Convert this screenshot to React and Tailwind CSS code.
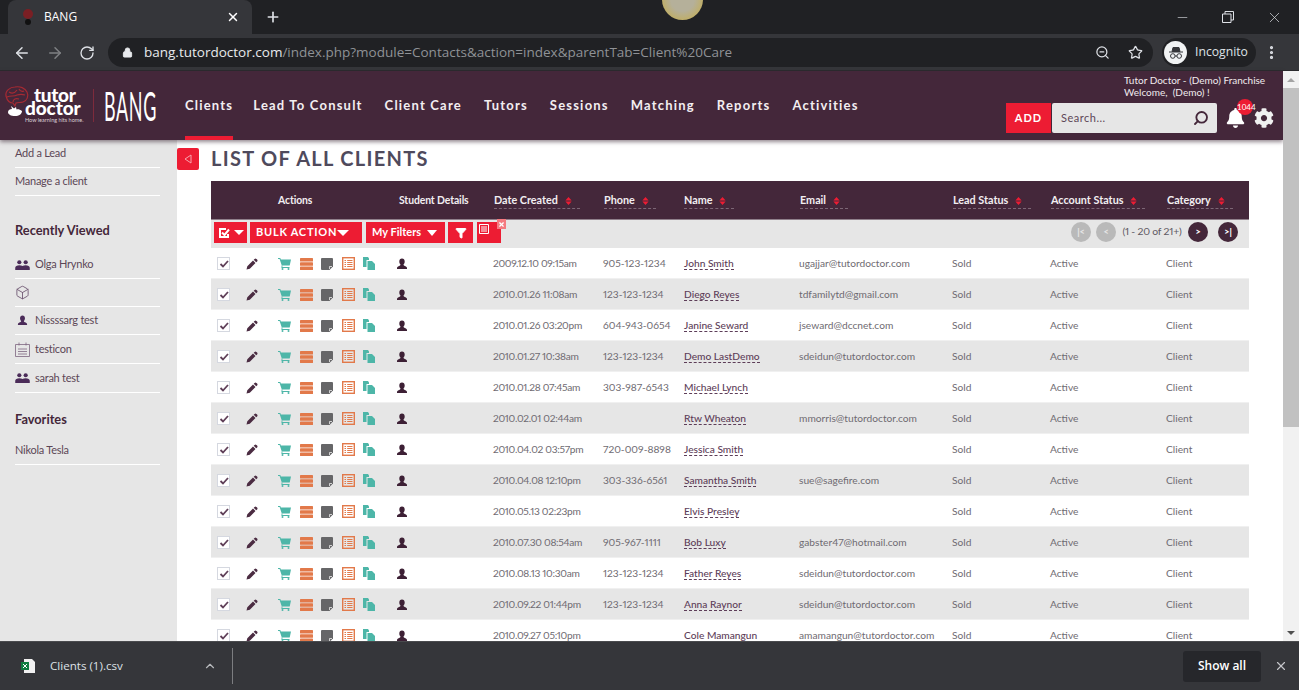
import React from 'react';
import { X, Plus, ArrowLeft, ArrowRight, RotateCw, Lock, ZoomOut, Star, EllipsisVertical, Minus, ChevronUp, Search, Funnel, Box } from 'lucide-react';
import { FaBell, FaCog } from 'react-icons/fa';

const clients = [
  ['2009.12.10 09:15am', '905-123-1234', 'John Smith', 'ugajjar@tutordoctor.com'],
  ['2010.01.26 11:08am', '123-123-1234', 'Diego Reyes', 'tdfamilytd@gmail.com'],
  ['2010.01.26 03:20pm', '604-943-0654', 'Janine Seward', 'jseward@dccnet.com'],
  ['2010.01.27 10:38am', '123-123-1234', 'Demo LastDemo', 'sdeidun@tutordoctor.com'],
  ['2010.01.28 07:45am', '303-987-6543', 'Michael Lynch', ''],
  ['2010.02.01 02:44am', '', 'Rtw Wheaton', 'mmorris@tutordoctor.com'],
  ['2010.04.02 03:57pm', '720-009-8898', 'Jessica Smith', ''],
  ['2010.04.08 12:10pm', '303-336-6561', 'Samantha Smith', 'sue@sagefire.com'],
  ['2010.05.13 02:23pm', '', 'Elvis Presley', ''],
  ['2010.07.30 08:54am', '905-967-1111', 'Bob Luxy', 'gabster47@hotmail.com'],
  ['2010.08.13 10:30am', '123-123-1234', 'Father Reyes', 'sdeidun@tutordoctor.com'],
  ['2010.09.22 01:44pm', '123-123-1234', 'Anna Raynor', 'sdeidun@tutordoctor.com'],
  ['2010.09.27 05:10pm', '', 'Cole Mamangun', 'amamangun@tutordoctor.com'],
];

const navItems = ['Clients', 'Lead To Consult', 'Client Care', 'Tutors', 'Sessions', 'Matching', 'Reports', 'Activities'];

const Person = ({ className }) => (
  <svg viewBox="0 0 12 12" className={className} fill="currentColor">
    <path d="M6 0.5c1.700 0 2.700 1.300 2.700 3 0 1.200-.5 2.400-1.200 3 0 .7.3 1 1.200 1.400 1 .4 2.300.8 2.300 2.100v1H1V10c0-1.300 1.300-1.700 2.300-2.100.9-.4 1.200-.7 1.200-1.400-.7-.6-1.200-1.800-1.200-3 0-1.700 1-3 2.700-3z" />
  </svg>
);

const People = ({ className }) => (
  <svg viewBox="0 0 16 11" className={className} fill="currentColor">
    <circle cx="4.500" cy="2.500" r="2.300" />
    <circle cx="11.500" cy="2.500" r="2.300" />
    <path d="M0 11V8.500C0 6.800 2 5.800 4.500 5.800c1.300 0 2.500.3 3.500.9 1-.6 2.200-.9 3.500-.9C14 5.800 16 6.800 16 8.500V11z" />
  </svg>
);

const PencilIcon = () => (
  <svg viewBox="0 0 12 12" className="w-[12px] h-[12px] ml-[16px] text-[#4b2c42]" fill="currentColor">
    <path d="M8.600.9a1.300 1.300 0 0 1 1.800 0l.7.7a1.300 1.300 0 0 1 0 1.800l-.9.9-2.500-2.500zM7 2.500L9.500 5 3.800 10.700.5 11.500l.8-3.300z" />
  </svg>
);

const Cart = () => (
  <svg viewBox="0 0 13 12" className="w-[13px] h-[12px] text-[#4db6a8]" fill="currentColor">
    <path d="M0 0h2.300l.5 1.500H13l-1.300 6H4.200L4.500 9h7v1H3.400L3.700 7.300 1.600 1H0z" />
    <circle cx="4.500" cy="11" r="1" />
    <circle cx="10.500" cy="11" r="1" />
  </svg>
);

const Stack = () => (
  <svg viewBox="0 0 13 12" className="w-[13px] h-[12px] text-[#e2794a]" fill="currentColor">
    <rect width="13" height="3.600" rx=".6" />
    <rect y="4.200" width="13" height="3.600" rx=".6" />
    <rect y="8.400" width="13" height="3.600" rx=".6" />
  </svg>
);

const Note = () => (
  <svg viewBox="0 0 12 12" className="w-[12px] h-[12px] text-[#666668]" fill="currentColor">
    <path d="M1 0h10a1 1 0 0 1 1 1v7.500L8.500 12H1a1 1 0 0 1-1-1V1a1 1 0 0 1 1-1z" />
    <path d="M8.500 11V8.500H11" fill="none" stroke="#fff" strokeWidth=".7" />
  </svg>
);

const Sheet = () => (
  <svg viewBox="0 0 13 13" className="w-[13px] h-[13px] text-[#e2794a]" fill="none" stroke="currentColor">
    <rect x=".7" y=".7" width="11.600" height="11.600" strokeWidth="1.400" />
    <path d="M2.500 3.500h1.500M2.500 5.500h1.500M2.500 7.500h1.500M2.500 9.500h1.500M5.200 3.500h5.300M5.200 5.500h5.300M5.200 7.500h5.300M5.200 9.500h5.300" />
  </svg>
);

const Copies = () => (
  <svg viewBox="0 0 12 13" className="w-[12px] h-[13px] text-[#4db6a8]" fill="currentColor">
    <path d="M0 0h5l1 1.500V3H3.500v7H0z" />
    <path d="M4.500 4H9l3 3v6H4.500z" />
  </svg>
);

const Logo = () => (
  <svg viewBox="0 0 80 40" className="w-[80px] h-[40px] overflow-visible font-['Lato',sans-serif]">
    <g fill="none" stroke="#a52a33" strokeWidth="1.200">
      <path d="M2 10C1 5 6 1 11 1c5-1 10 1 12 5 2 4 0 9-4 10-3 1-5 0-7 1l-1 3-2-3c-4 0-6-3-7-7z" />
      <path d="M5 6c3 2 6 1 8-2M3 11c4-2 7 0 10-2 3-1 5-1 8 0M9 16c0-3 3-4 6-3M15 3c1 2 3 3 5 2" />
    </g>
    <path d="M4 26c0-2 2-3 4-3l-1-3 3 2.500L12 21l.5 2.500c1.500-.5 3.500 0 5.500 1.500 0 3-3 5-7 5-4 0-7-1.500-7-4z" fill="#fff" />
    <text x="30" y="16" fontSize="19" fontWeight="900" letterSpacing="-0.3" fill="#fff">tutor</text>
    <text x="21" y="29" fontSize="19" fontWeight="900" letterSpacing="-0.1" fill="#fff">doctor</text>
    <text x="21" y="36" fontSize="5.500" fill="#d9ced5">How learning hits home.</text>
  </svg>
);

const SortLabel = ({ label, width }) => (
  <div className={`flex items-center gap-[7px] h-[15px] border-b border-dashed border-[#7c6675] ${width}`}>
    <span className="font-bold text-[10.800px] leading-none text-[#f2eef1] whitespace-nowrap">{label}</span>
    <svg viewBox="0 0 7 9" className="w-[7px] h-[8px] text-[#ed1c33]" fill="currentColor">
      <path d="M3.500 0L7 4H0zM0 5h7L3.500 9z" />
    </svg>
  </div>
);

const PageButton = ({ label, on }) => (
  <div className={`w-[20px] h-[20px] rounded-full flex items-center justify-center text-[9px] font-black ${on ? 'bg-[#44273a] text-white' : 'bg-[#b9b9b9] text-[#e6e6e6]'}`}>
    {label}
  </div>
);

const SideLink = ({ icon, tall, children }) => (
  <div className={`${tall ? 'h-[29px]' : 'h-[28px]'} flex items-center gap-[5px] border-b border-white text-[11px] tracking-[-0.25px] text-[#5c4656]`}>
    {icon && <span className="w-[15px] flex justify-center text-[#4b2c59]">{icon}</span>}
    {children}
  </div>
);

const Row = ({ client, alt }) => (
  <div className={`grid grid-cols-[282px_110px_81px_115px_153px_98px_116px_83px] items-center h-[31px] pt-px border-b border-[#f0f0f0] text-[10.200px] proportional-nums text-[#6f6b72] ${alt ? 'bg-[#e6e6e6]' : 'bg-white'}`}>
    <div className="flex items-center pl-[6px]">
      <span className="w-[13px] h-[13px] border border-[#d5d8e0] bg-white flex items-center justify-center">
        <svg viewBox="0 0 10 10" className="w-[10px] h-[10px] text-[#5f3f58]" fill="none" stroke="currentColor" strokeWidth="1.800">
          <path d="M1.500 5l2.500 2.500L9 2" />
        </svg>
      </span>
      <PencilIcon />
      <span className="ml-[20px] flex items-center w-[97px] justify-between">
        <Cart />
        <Stack />
        <Note />
        <Sheet />
        <Copies />
      </span>
      <Person className="ml-[21px] w-[12px] h-[12px] text-[#3d2035]" />
    </div>
    <div className="tracking-[-0.3px]">{client[0]}</div>
    <div>{client[1]}</div>
    <div>
      <span className="text-[#5d3d58] font-medium border-b border-dashed border-[#5d3d58]">{client[2]}</span>
    </div>
    <div>{client[3]}</div>
    <div>Sold</div>
    <div>Active</div>
    <div>Client</div>
  </div>
);

export default function App() {
  return (
    <div className="relative h-[690px] w-[1299px] overflow-hidden flex flex-col bg-white font-['Lato',sans-serif]">
      {/* ブラウザのタブバー */}
      <div className="h-[34px] shrink-0 bg-[#202124] flex items-end pl-[8px] text-white font-['Open_Sans',sans-serif]">
        <div className="w-[244px] h-[34px] rounded-t-[8px] bg-[#35363a] flex items-center pl-[14px] pr-[12px]">
          <svg viewBox="0 0 12 16" className="w-[12px] h-[16px]">
            <circle cx="6" cy="5" r="5" fill="#7a1f24" />
            <circle cx="6" cy="13" r="3" fill="#111" />
          </svg>
          <span className="ml-[10px] text-[12px]">BANG</span>
          <X className="ml-auto w-[14px] h-[14px]" strokeWidth={2.500} />
        </div>
        <Plus className="ml-[13px] mb-[9px] w-[16px] h-[16px] text-[#dee1e6]" strokeWidth={2.500} />
        <div className="ml-auto h-[34px] flex items-center gap-[32px] pr-[16px] text-[#dee1e6]">
          <Minus className="w-[15px] h-[15px]" strokeWidth={1} />
          <svg viewBox="0 0 12 12" className="w-[12px] h-[12px]" fill="none" stroke="currentColor">
            <path d="M.5 3h8.500v8.500H.5zM3 3V.5h8.500V9H9" />
          </svg>
          <X className="w-[17px] h-[17px]" strokeWidth={1} />
        </div>
      </div>

      {/* ブラウザのツールバー */}
      <div className="h-[37px] shrink-0 bg-[#35363a] flex items-center pt-px pl-[13px] pr-[15px] text-[#dee1e6] border-b border-[#2a2a2d] font-['Open_Sans',sans-serif]">
        <ArrowLeft className="w-[18px] h-[18px]" />
        <ArrowRight className="ml-[15px] w-[18px] h-[18px] text-[#7f8184]" />
        <RotateCw className="ml-[15px] w-[16px] h-[16px]" />
        <div className="ml-[13px] w-[1045px] h-[29px] rounded-full bg-[#202124] flex items-center pl-[14px] pr-[10px]">
          <Lock className="w-[11px] h-[11px] text-[#e8eaed]" fill="currentColor" />
          <span className="ml-[11px] text-[13.500px] text-[#e8eaed]">bang.tutordoctor.com</span>
          <span className="text-[13.500px] text-[#8f9296]">/index.php?module=Contacts&amp;action=index&amp;parentTab=Client%20Care</span>
          <ZoomOut className="ml-auto w-[15px] h-[15px]" />
          <Star className="ml-[18px] w-[15px] h-[15px]" />
        </div>
        <div className="ml-[9px] w-[94px] h-[29px] rounded-full bg-[#202124] flex items-center pl-[2px]">
          <span className="w-[23px] h-[23px] rounded-full bg-[#f1f3f4] flex items-center justify-center">
            <svg viewBox="0 0 16 16" className="w-[16px] h-[16px] text-[#35363a]" fill="none" stroke="currentColor">
              <path d="M1 7h14M4 6.500L5 2.500h6l1 4z" fill="currentColor" />
              <circle cx="4.800" cy="11" r="2.300" />
              <circle cx="11.200" cy="11" r="2.300" />
              <path d="M7 11h2" />
            </svg>
          </span>
          <span className="ml-[8px] text-[12.200px]">Incognito</span>
        </div>
        <EllipsisVertical className="ml-[7px] w-[17px] h-[17px]" strokeWidth={2.500} />
      </div>

      <div className="flex-1 min-h-0 flex">
        <div className="flex-1 min-w-0 flex flex-col">
          {/* アプリのヘッダー */}
          <header className="relative z-10 h-[69px] shrink-0 bg-[#44273a] shadow-[0_2px_4px_rgba(60,40,55,0.55)] flex text-white">
            <div className="w-[185px] shrink-0 flex items-center pl-[4px]">
              <Logo />
              <div className="ml-[9px] w-px h-[33px] bg-[#7d2b3c]" />
              <span className="ml-[10px] text-[18px] leading-none font-normal tracking-[0.6px] scale-y-[2.200]">BANG</span>
            </div>
            <nav className="flex gap-[22px] text-[13px] font-bold tracking-[1.200px] text-[#f3eef1]">
              {navItems.map((item, i) => (
                <div key={item} className={`h-[69px] pt-[25px] whitespace-nowrap ${i === 0 ? '-mr-[2px] border-b-4 border-[#ed1c33]' : ''}`}>
                  {item}
                </div>
              ))}
            </nav>
            <div className="ml-auto w-[277px] shrink-0 pt-[3px] relative">
              <div className="pl-[118px] text-[10px] leading-[12px] text-[#f0ebee] whitespace-nowrap">
                <div>Tutor Doctor - (Demo) Franchise</div>
                <div>Welcome,&nbsp; (Demo) !</div>
              </div>
              <div className="mt-[5px] flex items-center">
                <div className="w-[45px] h-[30px] bg-[#ed1c33] flex items-center justify-center text-[11px] font-bold tracking-[1px]">ADD</div>
                <div className="ml-px w-[165px] h-[30px] rounded-[2px] bg-[#e6e6e6] flex items-center pl-[9px] pr-[8px] text-[11px] tracking-[0.5px] text-[#5d4656]">
                  Search...
                  <Search className="ml-auto w-[16px] h-[16px] text-[#44273a] -scale-x-100" strokeWidth={2.800} />
                </div>
                <FaBell className="ml-[9px] w-[19px] h-[20px] text-white" />
                <FaCog className="ml-[9px] w-[20px] h-[20px] text-[#f0f0f0]" />
              </div>
              <span className="absolute right-[30px] top-[28px] w-[16px] h-[16px] rounded-full bg-[#ed1c33] text-[8px] leading-[16px] text-center">1044</span>
            </div>
          </header>

          <div className="flex-1 min-h-0 flex overflow-hidden">
            {/* サイドバー */}
            <aside className="w-[177px] shrink-0 bg-[#e6e6e6] pl-[15px] pr-[17px]">
              <SideLink>Add a Lead</SideLink>
              <SideLink>Manage a client</SideLink>
              <div className="mt-[25px] mb-[12px] text-[12.800px] font-bold leading-[18px] text-[#44273a]">Recently Viewed</div>
              <SideLink icon={<People className="w-[15px] h-[10px]" />}>Olga Hrynko</SideLink>
              <SideLink icon={<Box className="w-[15px] h-[15px] text-[#6d5570]" strokeWidth={1.400} />} />
              <SideLink icon={<Person className="w-[11px] h-[11px]" />}>Nissssarg test</SideLink>
              <SideLink tall icon={
                <svg viewBox="0 0 15 15" className="w-[15px] h-[15px] text-[#7d6680]" fill="none" stroke="currentColor" strokeWidth=".8">
                  <path d="M.5 2.500h14v12H.5zM4 .5v3M11 .5v3M3 7h9M3 9.500h9M3 12h9" />
                </svg>
              }>testicon</SideLink>
              <SideLink tall icon={<People className="w-[15px] h-[10px]" />}>sarah test</SideLink>
              <div className="mt-[17px] mb-[9px] text-[12.800px] font-bold leading-[18px] text-[#44273a]">Favorites</div>
              <SideLink>Nikola Tesla</SideLink>
            </aside>

            {/* メインコンテンツ */}
            <main className="flex-1 min-w-0 pl-[34px] pr-[34px] relative">
              <div className="absolute left-0 top-[8px] w-[22px] h-[22px] rounded-[2px] bg-[#ed1c33] flex items-center justify-center">
                <svg viewBox="0 0 8 10" className="w-[8px] h-[10px] text-[#f9a3ad]" fill="none" stroke="currentColor">
                  <path d="M7 1L1 5l6 4z" />
                </svg>
              </div>
              <h1 className="pt-[6px] h-[41px] text-[20px] leading-[24px] font-bold tracking-[1.300px] text-[#4f4a5c]">LIST OF ALL CLIENTS</h1>

              <div className="grid grid-cols-[282px_110px_81px_115px_153px_98px_116px_83px] items-center h-[38px] pt-[2px] bg-[#44273a]">
                <div className="relative h-full text-[10.400px] tracking-[-0.1px] font-bold text-[#f2eef1]">
                  <span className="absolute left-[67px] top-[10px]">Actions</span>
                  <span className="absolute left-[188px] top-[10px]">Student Details</span>
                </div>
                <div className="pl-px"><SortLabel label="Date Created" width="w-[86px]" /></div>
                <div className="pl-px"><SortLabel label="Phone" width="w-[52px]" /></div>
                <div><SortLabel label="Name" width="w-[50px]" /></div>
                <div className="pl-px"><SortLabel label="Email" width="w-[48px]" /></div>
                <div className="pl-px"><SortLabel label="Lead Status" width="w-[78px]" /></div>
                <div className="pl-px"><SortLabel label="Account Status" width="w-[94px]" /></div>
                <div className="pl-px"><SortLabel label="Category" width="w-[66px]" /></div>
              </div>

              <div className="relative h-[29px] bg-[#e6e6e6] border-t border-[#8f7f8a] flex items-start pt-[2px] pl-[3px] pr-[11px] text-white">
                <div className="w-[33px] h-[21px] bg-[#ed1c33] flex items-center pl-[4px] gap-[4px]">
                  <svg viewBox="0 0 12 12" className="w-[12px] h-[12px]" fill="none" stroke="currentColor" strokeWidth="2">
                    <path d="M10 7v3H2V2h6M4 5.500l2.500 2.500L11 2.500" />
                  </svg>
                  <span className="w-0 h-0 border-x-[5px] border-x-transparent border-t-[5px] border-t-white" />
                </div>
                <div className="ml-[3px] w-[112px] h-[21px] bg-[#ed1c33] flex items-center pl-[6px] text-[11px] font-bold tracking-[0.75px]">
                  BULK ACTION
                  <span className="w-0 h-0 border-x-[6px] border-x-transparent border-t-[6px] border-t-white" />
                </div>
                <div className="ml-[4px] w-[79px] h-[21px] bg-[#ed1c33] flex items-center pl-[6px] text-[11px] font-bold">
                  My Filters
                  <span className="ml-[6px] w-0 h-0 border-x-[5.500px] border-x-transparent border-t-[6px] border-t-white" />
                </div>
                <div className="ml-[3px] w-[25px] h-[21px] bg-[#ed1c33] flex items-center justify-center">
                  <Funnel className="w-[12px] h-[12px]" fill="currentColor" />
                </div>
                <div className="relative ml-[4px] w-[24px] h-[21px] bg-[#ed1c33] pl-[2px] pt-[2px]">
                  <svg viewBox="0 0 10 10" className="w-[10px] h-[10px]" fill="none" stroke="currentColor">
                    <path d="M.5.500h9v9h-9zM2 3h6M2 5h6M2 7h6" />
                  </svg>
                  <span className="absolute -right-[5px] -top-[3px] w-[9px] h-[10px] bg-[#f47a80] flex items-center justify-center">
                    <X className="w-[7px] h-[7px]" strokeWidth={4} />
                  </span>
                </div>
                <div className="ml-auto flex items-center gap-[5px]">
                  <PageButton label="|<" />
                  <PageButton label="<" />
                  <span className="text-[10.400px] tracking-[-0.2px] proportional-nums text-[#5f5963] w-[62px] text-center whitespace-nowrap">(1 - 20 of 21+)</span>
                  <PageButton label=">" on />
                  <span className="w-0" />
                  <PageButton label=">|" on />
                </div>
              </div>

              {clients.map((client, i) => (
                <Row key={client[2]} client={client} alt={i % 2 === 1} />
              ))}
            </main>
          </div>
        </div>

        {/* スクロールバー */}
        <div className="w-[16px] shrink-0 bg-[#f1f1f1] flex flex-col items-center relative z-20">
          <span className="mt-[7px] w-0 h-0 border-x-[4px] border-x-transparent border-b-[4px] border-b-[#a3a3a3]" />
          <div className="mt-[6px] w-[16px] h-[339px] bg-[#c1c1c1]" />
          <span className="mt-auto mb-[6px] w-0 h-0 border-x-[4px] border-x-transparent border-t-[4px] border-t-[#505050]" />
        </div>
      </div>

      {/* ダウンロードバー */}
      <div className="relative z-30 h-[49px] shrink-0 bg-[#35363a] border-t border-[#4a4b4e] flex items-center pl-[21px] pr-[11px] text-[#dee1e6] font-['Open_Sans',sans-serif]">
        <svg viewBox="0 0 14 14" className="w-[14px] h-[14px]">
          <path d="M3 0h8l3 3v11H3z" fill="#f1f1f1" />
          <rect y="3" width="8" height="8" fill="#107c41" />
          <path d="M2 5l4 4M6 5L2 9" stroke="#fff" />
        </svg>
        <span className="ml-[15px] w-[153px] text-[11.600px]">Clients (1).csv</span>
        <ChevronUp className="w-[14px] h-[14px] text-[#b8babd]" strokeWidth={2} />
        <div className="ml-[15px] w-px h-[36px] bg-[#7c7d80]" />
        <div className="ml-auto w-[78px] h-[31px] rounded-[3px] bg-[#26272b] flex items-center justify-center text-[12px] font-semibold text-white">Show all</div>
        <X className="ml-[13px] w-[14px] h-[14px] text-[#c4c6c9]" strokeWidth={2} />
      </div>

      {/* 画面上のカーソルハイライト */}
      <div className="absolute left-[662px] -top-[21px] w-[41px] h-[41px] rounded-full bg-[radial-gradient(circle,#b5b09a_40%,#c9ad3c_100%)]" />
    </div>
  );
}
